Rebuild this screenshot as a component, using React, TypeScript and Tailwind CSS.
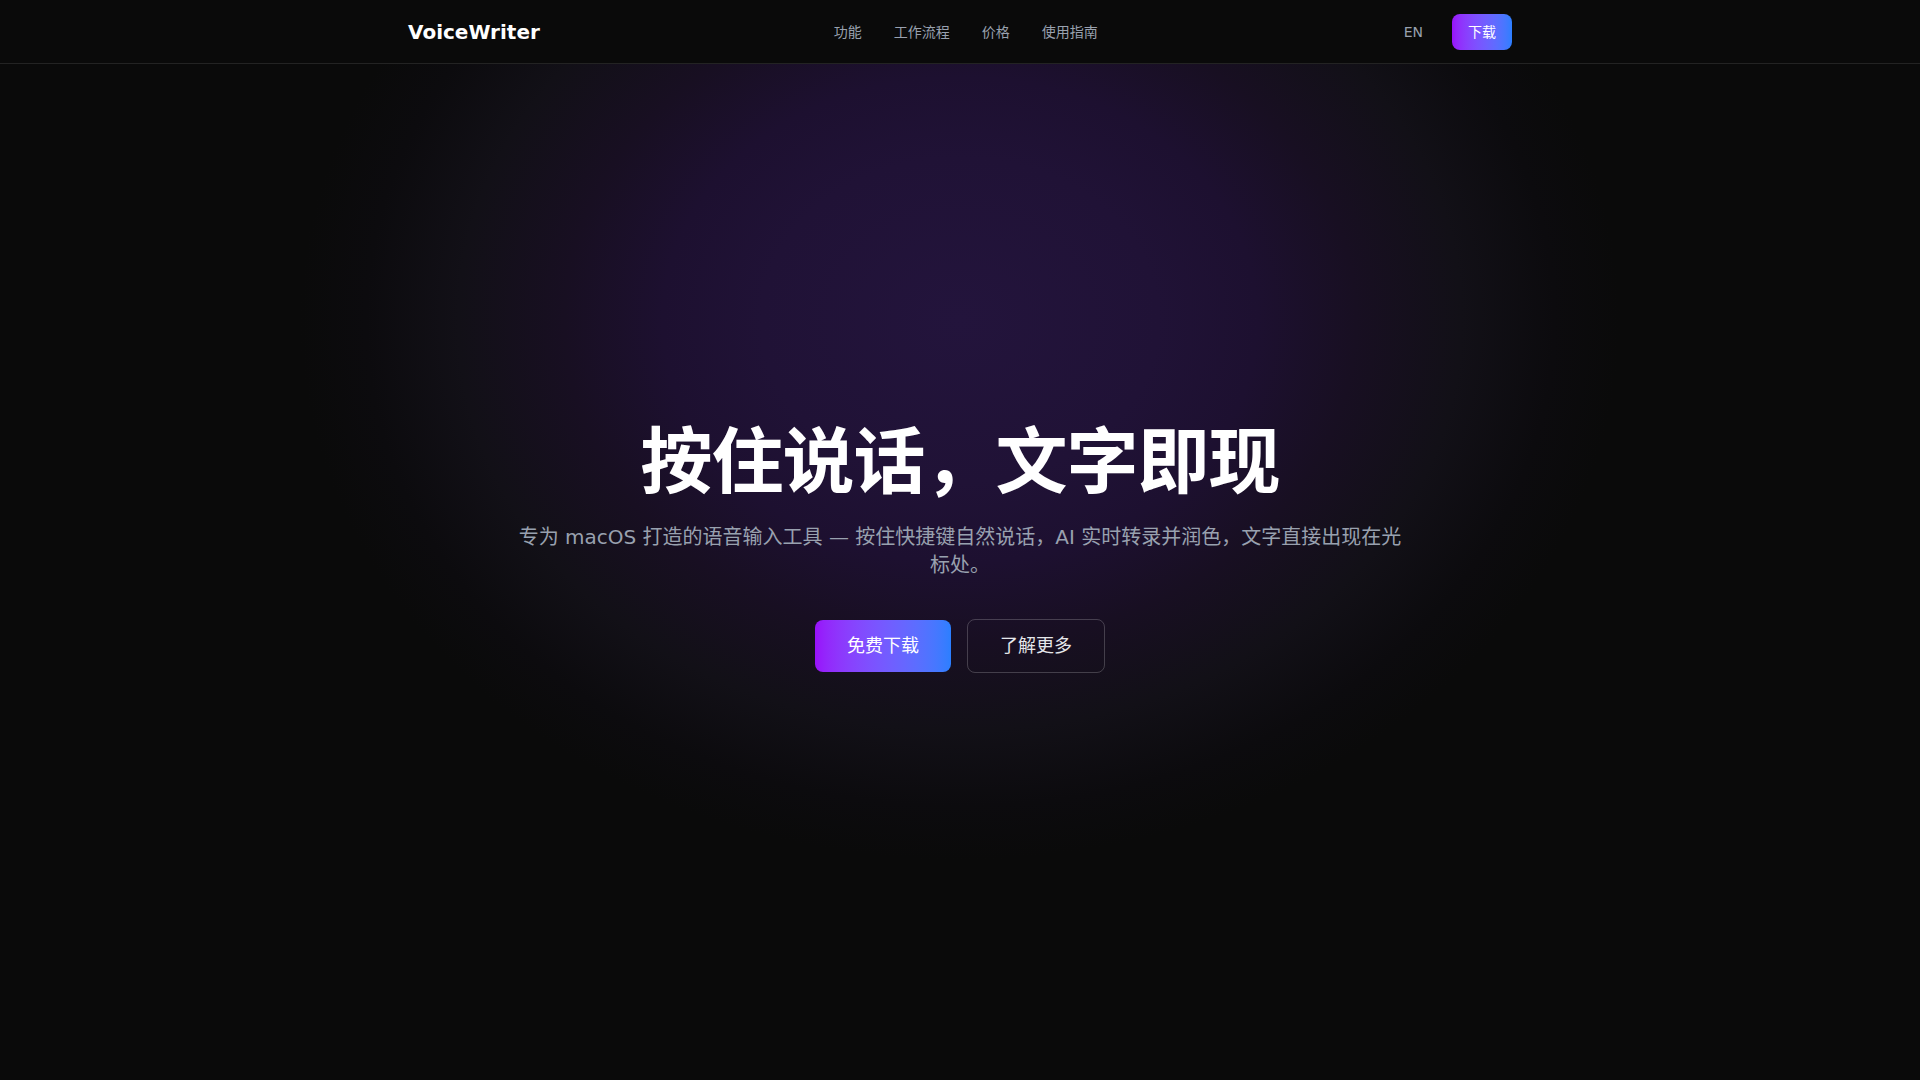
const navLinks = ["功能", "工作流程", "价格", "使用指南"];

export default function App() {
  return (
    <div className="min-h-screen bg-[#0a0a0a] font-['DejaVu_Sans','Noto_Sans_CJK_SC',sans-serif] text-white">
      <header className="relative z-10 h-16 border-b border-white/10 bg-[#0a0a0a]">
        <div className="mx-auto flex h-full max-w-6xl items-center justify-between px-6">
          <span className="text-xl font-bold">VoiceWriter</span>
          <nav className="mr-3 flex items-center gap-8">
            {navLinks.map((link) => (
              <a key={link} href="#" className="text-sm text-gray-400 hover:text-white">
                {link}
              </a>
            ))}
          </nav>
          <div className="flex items-center gap-[29px]">
            <button className="text-sm text-gray-400">EN</button>
            <button className="rounded-lg bg-gradient-to-r from-purple-600 to-blue-500 px-4 py-2 text-sm text-white">
              下载
            </button>
          </div>
        </div>
      </header>

      <section className="relative overflow-hidden pb-[409px] pt-[362px]">
        {/* background glow */}
        <div className="pointer-events-none absolute left-1/2 top-[-284px] h-[1080px] w-[1320px] -translate-x-1/2 bg-[radial-gradient(closest-side,#23143c_0%,#201236_30%,#1d1030_45%,#180f22_60%,#121017_76%,#0c0b0e_90%,#0a0a0a_100%)]" />
        <div className="relative mx-auto flex max-w-4xl flex-col items-center text-center">
          <h1 className="text-7xl font-bold leading-none tracking-[-1px] text-white">按住说话，文字即现</h1>
          <p className="mt-[25px] text-xl text-gray-400">
            专为 macOS 打造的语音输入工具 — 按住快捷键自然说话，AI 实时转录并润色，文字直接出现在光标处。
          </p>
          <div className="mt-10 flex items-center gap-4">
            <button className="rounded-lg bg-gradient-to-r from-purple-600 to-blue-500 px-8 py-3 text-lg text-white">
              免费下载
            </button>
            <button className="rounded-lg border border-white/20 px-8 py-3 text-lg text-gray-200">
              了解更多
            </button>
          </div>
        </div>
      </section>
    </div>
  );
}
